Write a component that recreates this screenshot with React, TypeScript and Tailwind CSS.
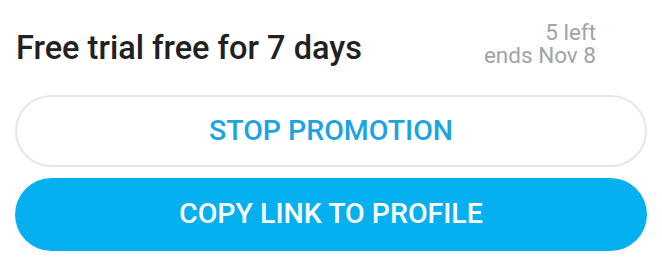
export default function App() {
  return (
    <div
      className="w-[662px] h-[268px] bg-white px-[15px] overflow-hidden"
      style={{ fontFamily: "Roboto, 'Liberation Sans', sans-serif" }}
    >
      <div className="flex items-start justify-between pt-[21px] pl-[1px] pr-[51px]">
        <h1 className="mt-[8px] text-[32.5px] leading-[38px] font-medium text-[#212121]">
          Free trial free for 7 days
        </h1>
        <div className="text-right text-[22.5px] leading-[22.5px] text-[#a0a3a7]">
          <div>5 left</div>
          <div>ends Nov 8</div>
        </div>
      </div>

      <button className="mt-[28px] flex h-[72px] w-full items-center justify-center rounded-full border-2 border-[#e6e6e6] bg-white text-[28.5px] font-medium text-[#1ba3e3]">
        STOP PROMOTION
      </button>
      <button className="mt-[11px] flex h-[73px] w-full items-center justify-center rounded-full bg-[#04b0f0] text-[28.5px] font-medium text-white">
        COPY LINK TO PROFILE
      </button>
    </div>
  );
}
